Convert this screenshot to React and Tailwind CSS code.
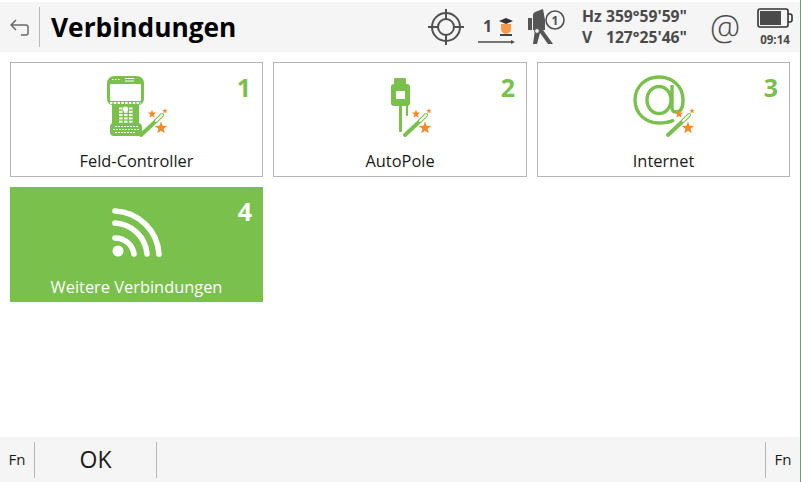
const font = { fontFamily: '"Open Sans", "Noto Sans", sans-serif' };

function starPoints(cx, cy, r) {
    const pts = [];
    for (let i = 0; i < 10; i++) {
        const rad = i % 2 === 0 ? r : r * 0.42;
        const a = -Math.PI / 2 + (i * Math.PI) / 5;
        pts.push(`${cx + rad * Math.cos(a)},${cy + rad * Math.sin(a)}`);
    }
    return pts.join(" ");
}

// wand + stars, (x, y) is the bottom end of the wand
function Wand({ x, y }) {
    return (
        <g transform={`translate(${x} ${y})`}>
            <path d="M0 0 L14 -13" stroke="#7ac04d" strokeWidth="4" strokeLinecap="round" />
            <path d="M15 -14 L21 -20" stroke="#7ac04d" strokeWidth="4" strokeLinecap="round" />
            <path d="M15 -14 L21 -20" stroke="#fff" strokeWidth="2" strokeLinecap="round" />
            <polygon points={starPoints(11, -21, 4.5)} fill="#f58a2a" />
            <polygon points={starPoints(24, -24, 2.8)} fill="#f58a2a" />
            <polygon points={starPoints(20, -7, 6.5)} fill="#f58a2a" />
        </g>
    );
}

function ControllerIcon() {
    const keys = [];
    for (let r = 0; r < 5; r++) {
        for (let c = 0; c < 3; c++) {
            if (r === 0 && c === 1) continue;
            keys.push(<rect key={`${r}-${c}`} x={19 + c * 5} y={35.5 + r * 3.3} width="3.6" height="2" fill="#fff" />);
        }
    }
    return (
        <svg width="73" height="66" viewBox="0 0 73 66" className="mt-[9px]">
            <path
                d="M15 4 H36 Q44 4 44 12 V26 Q44 32 39 33 V51 Q42 52 42 55 V60 Q42 64 38 64 H14 Q10 64 10 60 V55 Q10 52 12 51 V33 Q7 32 7 26 V12 Q7 4 15 4 Z"
                fill="#7ac04d"
            />
            <rect x="10" y="12" width="31" height="17" rx="1" fill="#fff" />
            <rect x="25" y="6" width="9" height="1" fill="#fff" />
            <rect x="25" y="8.5" width="9" height="1" fill="#fff" />
            <path d="M12 7.5 H21" stroke="#fff" strokeWidth="1" strokeDasharray="1.5 1.5" />
            <path d="M10 31 H41" stroke="#fff" strokeWidth="2" strokeDasharray="2.4 1.4" />
            <circle cx="25.5" cy="37" r="2.6" fill="#fff" />
            {keys}
            <path d="M15 54.5 H38" stroke="#fff" strokeWidth="1" strokeDasharray="2 1" />
            <path d="M13 57.5 H39" stroke="#fff" strokeWidth="1" strokeDasharray="2 1" />
            <path d="M15 60.5 H36" stroke="#fff" strokeWidth="1" strokeDasharray="2 1" />
            <Wand x={41} y={63} />
        </svg>
    );
}

function PoleIcon() {
    return (
        <svg width="74" height="66" viewBox="0 0 74 66" className="mt-[9px]">
            <path d="M32 6 H42 Q43 6 43 7 V13 H31 V7 Q31 6 32 6 Z" fill="#7ac04d" />
            <rect x="28" y="12" width="19" height="22" rx="3" fill="#7ac04d" />
            <rect x="33" y="19" width="9" height="8" fill="#fff" />
            <rect x="36" y="33" width="3" height="27" rx="1" fill="#7ac04d" />
            <rect x="43" y="33" width="2" height="11" fill="#7ac04d" />
            <Wand x={42} y={63} />
        </svg>
    );
}

function AtIcon() {
    return (
        <svg width="73" height="66" viewBox="0 0 73 66" className="mt-[9px]">
            <ellipse cx="32" cy="28" rx="12" ry="13.5" fill="none" stroke="#7ac04d" strokeWidth="3.4" />
            <path
                d="M45 13 V36 Q45 40 49 40 Q56 40 56 28 C56 14 45 5 32 5 C18 5 8 15 8 28 C8 41 18 51 32 51 C38 51 43 50 47 48"
                fill="none"
                stroke="#7ac04d"
                strokeWidth="3.4"
            />
            <Wand x={41} y={63} />
        </svg>
    );
}

function WifiIcon() {
    return (
        <svg width="56" height="58" viewBox="0 0 56 58" className="mt-[18px]">
            <circle cx="9" cy="46" r="5.5" fill="#fff" />
            <g fill="none" stroke="#fff" strokeWidth="5.6" strokeLinecap="round">
                <path d="M6 33 A19 19 0 0 1 25 49" />
                <path d="M6 18 A34 34 0 0 1 38 49" />
                <path d="M6 6 A46 46 0 0 1 50 49" />
            </g>
        </svg>
    );
}

function Card({ num, label, icon, active }) {
    return (
        <div
            className={`relative h-[115px] flex flex-col items-center ${
                active ? "bg-[#7ac04d] text-white" : "border border-[#b4b4b4] text-[#1a1a1a]"
            }`}
        >
            {icon}
            <span
                className={`absolute right-[11px] top-[8px] text-[25px] leading-[32px] font-bold ${
                    active ? "text-white" : "text-[#7ac04d]"
                }`}
            >
                {num}
            </span>
            <span className="absolute inset-x-0 bottom-[5px] text-center text-[16.4px] leading-5">{label}</span>
        </div>
    );
}

function StatusBar() {
    return (
        <div className="ml-auto flex items-center text-[#4a4a4a]">
            <svg width="38" height="38" viewBox="0 0 38 38" className="mr-[12px]" fill="none" stroke="#505050" strokeWidth="2">
                <circle cx="19" cy="19" r="14" />
                <circle cx="19" cy="19" r="8" />
                <path d="M1 19 H12 M26 19 H37 M19 1 V12 M19 26 V37" />
            </svg>
            <div className="relative w-[38px] h-[34px] mr-[11px]">
                <span className="absolute left-[6px] top-[6px] text-[16px] leading-5 font-bold">1</span>
                <svg width="38" height="34" viewBox="0 0 38 34" className="absolute inset-0">
                    <path d="M22 11 L29 8 L36 11 L29 14 Z" fill="#333" />
                    <path d="M24 14 H34 V19 Q34 23 29 24 Q24 23 24 19 Z" fill="#f59a4a" />
                    <path d="M23 24 H35 V26 H23 Z" fill="#444" />
                    <path d="M1 32 H35" stroke="#4a4a4a" strokeWidth="1.6" />
                    <path d="M34 30 L38 32 L34 34 Z" fill="#4a4a4a" />
                </svg>
            </div>
            <svg width="39" height="38" viewBox="0 0 39 38" className="mr-[17px]">
                <path d="M9 4 L17 1 L19 12 V22 H7 V6 Z" fill="#555" />
                <rect x="2" y="10" width="4" height="12" fill="#555" />
                <path d="M9 22 L7 36 H11 L14 25 L22 36 H27 L17 22 Z" fill="#555" />
                <circle cx="11" cy="23" r="2.4" fill="#f5f5f5" stroke="#555" strokeWidth="1" />
                <circle cx="29" cy="12" r="9" fill="#f5f5f5" stroke="#505050" strokeWidth="1.6" />
                <text x="29" y="16.5" textAnchor="middle" fontSize="12" fontWeight="700" fill="#505050" style={font}>
                    1
                </text>
            </svg>
            <div className="w-[105px] mr-[23px] text-[15.7px] leading-[21px] font-bold">
                <div className="flex justify-between">
                    <span>Hz</span>
                    <span>359°59'59"</span>
                </div>
                <div className="flex justify-between">
                    <span>V</span>
                    <span>127°25'46"</span>
                </div>
            </div>
            <span className="w-[30px] mr-[16px] text-center text-[34px] leading-[38px] font-light">@</span>
            <div className="w-[38px] mr-[6px] flex flex-col items-center">
                <svg width="36" height="20" viewBox="0 0 36 20" fill="none">
                    <rect x="1" y="1" width="30" height="18" rx="2" stroke="#333" strokeWidth="1.6" />
                    <rect x="3" y="3" width="21" height="14" fill="#4a4a4a" />
                    <path d="M31 6 H33 Q35 6 35 8 V12 Q35 14 33 14 H31" stroke="#333" strokeWidth="1.6" />
                </svg>
                <span className="mt-[5px] text-[11.5px] leading-[14px] font-bold">09:14</span>
            </div>
        </div>
    );
}

export default function App() {
    return (
        <div style={font} className="h-[482px] w-[801px] flex flex-col bg-white overflow-hidden border-r border-[#6a9f74]">
            <header className="mt-[2px] h-[50px] shrink-0 flex items-center bg-[#f5f5f5]">
                <svg width="20" height="20" viewBox="0 0 20 20" className="ml-[10px]" fill="none" stroke="#6b6b6b" strokeWidth="1.5">
                    <path d="M6 3 L1 8 L6 13 M1 8 H16 Q18 8 18 10 V16 Q18 18 16 18 H11" />
                </svg>
                <div className="ml-[9px] h-[40px] w-px bg-[#b8b8b8]" />
                <h1 className="ml-[11px] text-[26.3px] leading-8 font-bold text-black">Verbindungen</h1>
                <StatusBar />
            </header>
            <main className="flex-1 p-[10px] grid grid-cols-[253px_254px_253px] auto-rows-[115px] gap-[10px]">
                <Card num="1" label="Feld-Controller" icon={<ControllerIcon />} />
                <Card num="2" label="AutoPole" icon={<PoleIcon />} />
                <Card num="3" label="Internet" icon={<AtIcon />} />
                <Card num="4" label="Weitere Verbindungen" icon={<WifiIcon />} active />
            </main>
            <footer className="h-[45px] shrink-0 flex items-center bg-[#f5f5f5] text-[#1a1a1a]">
                <span className="w-[34px] text-center text-[15px]">Fn</span>
                <div className="h-[36px] w-px bg-[#b8b8b8]" />
                <span className="w-[121px] text-center text-[23px]">OK</span>
                <div className="h-[36px] w-px bg-[#b8b8b8]" />
                <div className="ml-auto h-[36px] w-px bg-[#b8b8b8]" />
                <span className="w-[34px] text-center text-[15px]">Fn</span>
            </footer>
        </div>
    );
}
